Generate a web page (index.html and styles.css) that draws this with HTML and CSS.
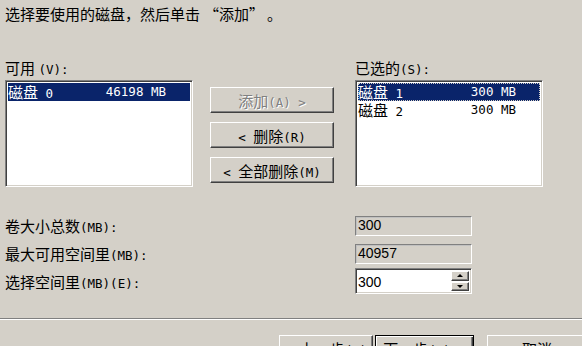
FILE: index.html
```html
<!DOCTYPE html>
<html lang="zh-CN">
<head>
<meta charset="utf-8">
<title>选择磁盘</title>
<link rel="stylesheet" href="styles.css">
</head>
<body>
<div class="dialog">
  <p class="intro">选择要使用的磁盘，然后单击<span class="lq">“</span>添加<span class="rq">”</span>。</p>

  <div class="pick">
    <div class="col">
      <div class="label">可用 <span class="en">(V):</span></div>
      <div class="listbox sunken">
        <div class="row sel"><span class="name">磁盘<span class="en"> 0</span></span><span class="size en">46198 MB</span></div>
      </div>
    </div>

    <div class="mid">
      <div class="btn raised disabled"><span class="cap">添加<span class="en">(A) &gt;</span></span></div>
      <div class="btn raised"><span class="cap"><span class="en">&lt; </span>删除<span class="en">(R)</span></span></div>
      <div class="btn raised"><span class="cap"><span class="en">&lt; </span>全部删除<span class="en">(M)</span></span></div>
    </div>

    <div class="col">
      <div class="label">已选的<span class="en">(S):</span></div>
      <div class="listbox sunken">
        <div class="row sel focus"><span class="name">磁盘<span class="en"> 1</span></span><span class="size en">300 MB</span></div>
        <div class="row"><span class="name">磁盘<span class="en"> 2</span></span><span class="size en">300 MB</span></div>
      </div>
    </div>
  </div>

  <div class="fields">
    <div class="frow">
      <div class="flabel">卷大小总数<span class="en">(MB):</span></div>
      <div class="field ro">300</div>
    </div>
    <div class="frow">
      <div class="flabel">最大可用空间里<span class="en">(MB):</span></div>
      <div class="field ro">40957</div>
    </div>
    <div class="frow tall">
      <div class="flabel">选择空间里<span class="en">(MB)(E):</span></div>
      <div class="spin sunken">
        <div class="val">300</div>
        <div class="arrows">
          <div class="arrow raised"><span class="tri up"></span></div>
          <div class="arrow raised"><span class="tri down"></span></div>
        </div>
      </div>
    </div>
  </div>

  <div class="separator"></div>

  <div class="footer">
    <div class="btn raised back"><span class="cap"><span class="en">&lt; </span>上一步<span class="en">(B)</span></span></div>
    <div class="btn default next"><span class="cap">下一步<span class="en">(N) &gt;</span></span></div>
    <div class="btn raised cancel"><span class="cap">取消</span></div>
  </div>
</div>
</body>
</html>
```

FILE: styles.css
```css
html, body {
  margin: 0;
  padding: 0;
}

body {
  width: 582px;
  height: 346px;
  overflow: hidden;
  background: #d4d0c8;
  color: #000;
  font-family: "Noto Sans CJK SC", "Noto Sans", sans-serif;
  font-size: 15px;
}

.en {
  font-family: "DejaVu Sans Mono", monospace;
  font-size: 12.5px;
}

.dialog {
  padding-top: 4px;
}

.intro {
  margin: 0;
  padding-left: 5px;
  height: 20px;
  line-height: 20px;
  white-space: nowrap;
}

.lq,
.rq {
  display: inline-block;
  width: 16px;
}

.lq {
  text-align: right;
  padding-left: 3px;
}

.rq {
  text-align: left;
  padding-right: 2px;
}

/* upper area: two lists with buttons in between */
.pick {
  display: flex;
  margin-top: 34px;
  padding-left: 5px;
}

.col {
  width: 188px;
  display: flex;
  flex-direction: column;
}

.label {
  height: 20px;
  line-height: 20px;
  margin-bottom: 2px;
  white-space: nowrap;
}

.sunken {
  box-sizing: border-box;
  border: 1px solid;
  border-color: #808080 #ffffff #ffffff #808080;
  box-shadow: inset 1px 1px 0 #404040, inset -1px -1px 0 #d4d0c8;
}

.raised {
  box-sizing: border-box;
  border: 1px solid;
  border-color: #ffffff #404040 #404040 #ffffff;
  box-shadow: inset -1px -1px 0 #808080;
}

.listbox {
  height: 107px;
  background: #fff;
  padding: 2px;
}

.row {
  display: flex;
  height: 18px;
  line-height: 18px;
  white-space: nowrap;
  box-sizing: border-box;
}

.row .name {
  width: 96px;
}

.row .size {
  width: 62px;
  text-align: right;
}

.row.sel {
  background: #0a246a;
  color: #fff;
}

.row.focus {
  outline: 1px dotted #d4d0c8;
  outline-offset: -1px;
}

.mid {
  width: 124px;
  margin: 0 21px 0 17px;
  padding-top: 29px;
  display: flex;
  flex-direction: column;
  gap: 9px;
}

.btn {
  height: 26px;
  display: flex;
  align-items: center;
  justify-content: center;
  background: #d4d0c8;
  white-space: nowrap;
}

.cap {
  white-space: pre;
}

.btn.disabled {
  color: #808080;
  text-shadow: 1px 1px 0 #ffffff;
}

/* lower area: size fields */
.fields {
  margin-top: 28px;
  padding-left: 5px;
}

.frow {
  display: grid;
  grid-template-columns: 350px 117px;
  align-items: center;
  height: 20px;
}

.frow + .frow {
  margin-top: 8px;
}

.frow.tall {
  height: 26px;
  margin-top: 5px;
}

.flabel {
  white-space: nowrap;
}

.field {
  box-sizing: border-box;
  height: 20px;
  line-height: 17px;
  padding-left: 2px;
  font-family: "Liberation Sans", Arial, sans-serif;
  font-size: 14px;
  border: 1px solid;
  border-color: #808080 #ffffff #ffffff #808080;
  box-shadow: inset 1px 1px 0 #c0c0c0;
}

.field.ro {
  background: #d4d0c8;
}

.spin {
  height: 26px;
  background: #fff;
  display: flex;
  padding: 2px;
}

.spin .val {
  flex: 1;
  font-family: "Liberation Sans", Arial, sans-serif;
  font-size: 14px;
  line-height: 22px;
}

.arrows {
  width: 18px;
  display: flex;
  flex-direction: column;
  gap: 1px;
}

.arrow {
  flex: 1;
  background: #d4d0c8;
  display: flex;
  align-items: center;
  justify-content: center;
}

.tri {
  width: 0;
  height: 0;
  border-left: 3px solid transparent;
  border-right: 3px solid transparent;
}

.tri.up {
  border-bottom: 3px solid #000;
}

.tri.down {
  border-top: 3px solid #000;
}

.separator {
  margin-top: 24px;
  height: 0;
  border-top: 1px solid #808080;
  border-bottom: 1px solid #ffffff;
}

.footer {
  display: flex;
  margin-top: 15px;
  padding-left: 279px;
}

.back {
  flex: none;
  width: 94px;
}

.next {
  flex: none;
  width: 99px;
  margin-left: 2px;
  box-sizing: border-box;
  border: 1px solid #000;
  box-shadow: inset 1px 1px 0 #ffffff, inset -1px -1px 0 #404040, inset -2px -2px 0 #808080;
}

.cancel {
  flex: none;
  width: 100px;
  margin-left: 13px;
}
```
